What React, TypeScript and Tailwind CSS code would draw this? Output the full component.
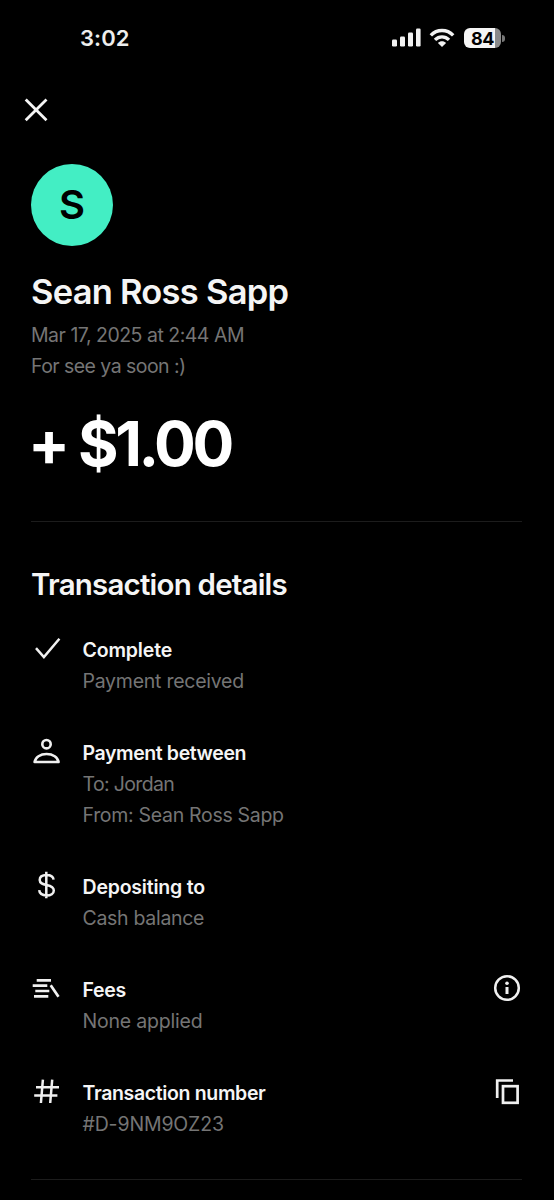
import type { ReactNode } from "react";

const StatusBar = () => (
  <div className="flex h-[76px] items-center justify-between pr-[49px] pl-20">
    <span className="text-[22px] font-semibold tracking-[0.1px] text-[#ededed]">
      3:02
    </span>
    <div className="flex items-center">
      <svg width="30" height="20" viewBox="0 0 30 20" fill="#f2f2f2">
        <rect x="1" y="11.5" width="5" height="7" rx="1.2" />
        <rect x="9" y="8.5" width="5" height="10" rx="1.2" />
        <rect x="17" y="4.5" width="5" height="14" rx="1.2" />
        <rect x="25" y="0.5" width="4.6" height="18" rx="1.2" />
      </svg>
      <svg
        className="ml-2"
        width="26"
        height="20"
        viewBox="0 0 26 20"
        fill="none"
        stroke="#f2f2f2"
        strokeWidth="3.4"
      >
        <path d="M1.8 7.3C8 0.8 18 0.8 24.2 7.3" />
        <path d="M6 11.9C10 7.9 16 7.9 20 11.9" />
        <path d="M13 19L8.9 14.9C11.2 12.7 14.8 12.7 17.1 14.9Z" fill="#f2f2f2" stroke="none" />
      </svg>
      <div className="ml-[9px] flex items-center">
        <div className="flex h-5 w-[37px] items-center justify-center rounded-[6px] bg-gradient-to-r from-[#f5f5f5] from-84% to-[#8a8a8a] to-84% text-[18px] font-bold tracking-[-0.5px] text-black">
          84
        </div>
        <div className="ml-px h-[7px] w-[3px] rounded-r-full bg-[#777]" />
      </div>
    </div>
  </div>
);

const CheckIcon = () => (
  <svg width="32" height="32" viewBox="0 0 32 32" fill="none" stroke="#f0f0f0" strokeWidth="2.5">
    <path d="M5 15.2L12.9 24L28.4 5.8" />
  </svg>
);

const PersonIcon = () => (
  <svg width="32" height="32" viewBox="0 0 32 32" fill="none" stroke="#f0f0f0" strokeWidth="2.6">
    <circle cx="15.5" cy="8.2" r="4.2" />
    <path d="M3.6 26C4.4 21.3 9.2 18 15.6 18S26.8 21.3 27.6 26Z" strokeLinejoin="round" />
  </svg>
);

const DollarIcon = () => (
  <svg width="32" height="32" viewBox="0 0 32 32" fill="none" stroke="#f0f0f0" strokeWidth="2.5">
    <path d="M15.3 1.8V28.2M22.6 9.6C22.2 6.4 19.4 5 15.6 5C11.6 5 8.7 6.8 8.7 10C8.7 13.3 11.6 14.1 15.6 15C19.8 15.9 22.8 16.9 22.8 20.4C22.8 23.6 19.8 25.4 15.7 25.4C11.5 25.4 8.5 23.6 8.2 20.2" />
  </svg>
);

const FeesIcon = () => (
  <svg width="32" height="32" viewBox="0 0 32 32" fill="none" stroke="#f0f0f0" strokeWidth="2.7">
    <path d="M5.7 7.3H20M1.7 12.7H16.3M4.3 18H18.3M3 23.3H17.3M19.7 12.2L27.5 23.8" />
  </svg>
);

const HashIcon = () => (
  <svg width="32" height="32" viewBox="0 0 32 32" fill="none" stroke="#f0f0f0" strokeWidth="2.5">
    <path d="M5 11.2H28M3.2 19.4H26.4M11.9 3.6L9.9 27M21.2 3.6L19.2 27" />
  </svg>
);

const InfoIcon = () => (
  <svg width="32" height="32" viewBox="0 0 32 32" fill="none" stroke="#f0f0f0" strokeWidth="2.5">
    <circle cx="16" cy="16" r="11.8" />
    <path d="M16 15V22" strokeWidth="3" />
    <circle cx="16" cy="11.2" r="1.8" fill="#f0f0f0" stroke="none" />
  </svg>
);

const CopyIcon = () => (
  <svg width="32" height="32" viewBox="0 0 32 32" fill="none" stroke="#f0f0f0" strokeWidth="2.7">
    <path d="M6.2 23V5.5H22" />
    <rect x="12" y="11.2" width="14.6" height="16.6" />
  </svg>
);

type DetailRow = {
  icon: ReactNode;
  title: string;
  titleClass: string;
  lines: { text: string; className: string }[];
  action?: ReactNode;
  label?: string;
};

const rows: DetailRow[] = [
  {
    icon: <CheckIcon />,
    title: "Complete",
    titleClass: "tracking-[-0.15px]",
    lines: [{ text: "Payment received", className: "tracking-[-0.25px]" }],
  },
  {
    icon: <PersonIcon />,
    title: "Payment between",
    titleClass: "tracking-[-0.4px]",
    lines: [
      { text: "To: Jordan", className: "tracking-[-0.65px]" },
      { text: "From: Sean Ross Sapp", className: "tracking-[-0.3px]" },
    ],
  },
  {
    icon: <DollarIcon />,
    title: "Depositing to",
    titleClass: "tracking-[-0.2px]",
    lines: [{ text: "Cash balance", className: "tracking-[-0.3px]" }],
  },
  {
    icon: <FeesIcon />,
    title: "Fees",
    titleClass: "tracking-[-0.3px]",
    lines: [{ text: "None applied", className: "tracking-[-0.2px]" }],
    action: <InfoIcon />,
    label: "About fees",
  },
  {
    icon: <HashIcon />,
    title: "Transaction number",
    titleClass: "tracking-[-0.35px]",
    lines: [{ text: "#D-9NM9OZ23", className: "tracking-[-0.15px]" }],
    action: <CopyIcon />,
    label: "Copy transaction number",
  },
];

const App = () => {
  return (
    <div className="h-[1200px] w-[554px] overflow-hidden bg-black font-['Inter','Liberation_Sans',sans-serif] text-[#f5f5f5]">
      <StatusBar />
      <button className="mt-[18px] ml-5 block" aria-label="Close">
        <svg width="32" height="32" viewBox="0 0 32 32" fill="none" stroke="#f5f5f5" strokeWidth="2.8">
          <path d="M5.7 5.5L26.5 26.3M26.5 5.5L5.7 26.3" />
        </svg>
      </button>

      <main className="mr-8 ml-[31px] pt-[38px]">
        <div className="flex size-[82px] items-center justify-center rounded-full bg-[#43eec4] text-[40px] font-semibold text-black">
          S
        </div>
        <h1 className="mt-6 text-[34.5px] leading-[44px] font-semibold tracking-[-0.75px] whitespace-nowrap">
          Sean Ross Sapp
        </h1>
        <div className="mt-1.5 text-[19.5px] leading-[31px] text-[#757575]">
          <p className="tracking-[-0.5px]">Mar 17, 2025 at 2:44 AM</p>
          <p className="tracking-[-0.55px]">For see ya soon :)</p>
        </div>
        <p className="mt-[26px] -ml-[3px] text-[62px] leading-[72px] font-bold tracking-[-3.4px] text-white whitespace-nowrap">
          + $1.00
        </p>

        <section className="mt-[41px] border-y border-[#1c1c1c] pt-[42px] pb-[39px]">
          <h2 className="text-[29.5px] leading-10 font-semibold tracking-[-0.8px]">
            Transaction details
          </h2>
          <ul className="mt-[31px] flex flex-col gap-[41px]">
            {rows.map((row) => (
              <li key={row.title} className="flex items-start">
                <div className="-mt-0.5 w-[51px] shrink-0">{row.icon}</div>
                <div className="grow pl-[0.5px] text-[19.5px] leading-[31px] whitespace-nowrap">
                  <h3 className={`font-semibold ${row.titleClass}`}>{row.title}</h3>
                  {row.lines.map((line) => (
                    <p key={line.text} className={`text-[#757575] ${line.className}`}>
                      {line.text}
                    </p>
                  ))}
                </div>
                {row.action && (
                  <button className="-mt-[3px] -mr-px" aria-label={row.label}>
                    {row.action}
                  </button>
                )}
              </li>
            ))}
          </ul>
        </section>
      </main>
    </div>
  );
};

export default App;
